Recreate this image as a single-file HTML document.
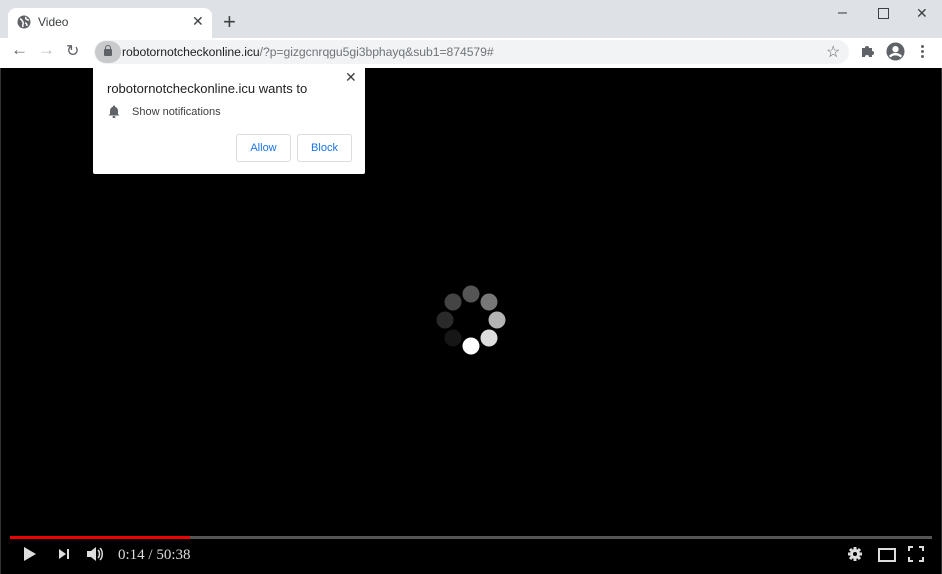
<!DOCTYPE html><html><head><style>
body{margin:0;width:942px;height:574px;overflow:hidden;background:#000;font-family:"Liberation Sans",Arial,sans-serif;position:relative}
.a{position:absolute}
</style></head><body>
<div class="a" style="left:0;top:0;width:942px;height:38px;background:#dee1e6"></div>
<div class="a" style="left:8px;top:8px;width:204px;height:32px;background:#fff;border-radius:8px 8px 0 0"></div>
<svg class="a" style="left:17px;top:15px" width="14" height="14" viewBox="0 0 14 14"><circle cx="7" cy="7" r="6.5" fill="#5f6368"/><path d="M3 4c2 0 2 2 3 3s-1 3 0 5M9 2c-1 2 1 3 3 3M8 8c1 0 2 1 2 3" stroke="#fff" stroke-width="1.5" fill="none"/></svg>
<div class="a" style="left:38px;top:15px;font-size:12px;color:#3c4043">Video</div>
<div class="a" style="left:192px;top:13px;font-size:14px;color:#3c4043">✕</div>
<div class="a" style="left:223px;top:9px;font-size:22px;color:#3c4043;font-weight:300">+</div>
<div class="a" style="left:838px;top:4px;font-size:16px;color:#3c4043">–</div>
<div class="a" style="left:878px;top:8px;width:9px;height:9px;border:1px solid #3c4043"></div>
<div class="a" style="left:916px;top:5px;font-size:14px;color:#3c4043">✕</div>
<div class="a" style="left:0;top:38px;width:942px;height:30px;background:#fff"></div>
<div class="a" style="left:11px;top:40px;font-size:17px;color:#5f6368">←</div>
<div class="a" style="left:38px;top:40px;font-size:17px;color:#bbb">→</div>
<div class="a" style="left:66px;top:41px;font-size:16px;color:#5f6368">↻</div>
<div class="a" style="left:94px;top:40px;width:755px;height:24px;background:#f1f3f4;border-radius:12px"></div>
<div class="a" style="left:95px;top:41px;width:26px;height:22px;background:#c8cacc;border-radius:11px"></div>
<div class="a" style="left:104px;top:49px;width:8px;height:7px;background:#5f6368;border-radius:1px"></div>
<div class="a" style="left:105px;top:45px;width:4px;height:5px;border:1px solid #5f6368;border-radius:3px 3px 0 0"></div>
<div class="a" style="left:122px;top:45px;font-size:12.2px;color:#202124;letter-spacing:-0.05px">robotornotcheckonline.icu<span style="color:#70757a">/?p=gizgcnrqgu5gi3bphayq&amp;sub1=874579#</span></div>
<div class="a" style="left:826px;top:42px;font-size:16px;color:#5f6368">☆</div>
<svg class="a" style="left:861px;top:44px" width="14" height="14" viewBox="0 0 14 14"><path d="M1 4h3a2 2 0 1 1 4 0h3v3a2 2 0 1 1 0 4v2H8a2 2 0 1 0-4 0H1z" fill="#5f6368"/></svg>
<svg class="a" style="left:886px;top:42px" width="19" height="19" viewBox="0 0 20 20"><circle cx="10" cy="10" r="9.5" fill="#5f6368"/><circle cx="10" cy="7.5" r="3.3" fill="#fff"/><path d="M4 15.5c3-3.5 9-3.5 12 0" stroke="#fff" stroke-width="2.5" fill="none"/></svg>
<div class="a" style="left:921px;top:45px;width:3px;height:3px;background:#5f6368;border-radius:2px;box-shadow:0 5px #5f6368,0 10px #5f6368"></div>
<div class="a" style="left:0;top:68px;width:1px;height:506px;background:#333"></div>
<div class="a" style="left:941px;top:68px;width:1px;height:506px;background:#333"></div>
<div class="a" style="left:93px;top:67px;width:272px;height:107px;background:#fff;border-radius:0 0 2px 2px"></div>
<div class="a" style="left:345px;top:69px;font-size:14px;color:#3c4043">✕</div>
<div class="a" style="left:107px;top:81px;font-size:13px;color:#202124">robotornotcheckonline.icu wants to</div>
<svg class="a" style="left:108px;top:105px" width="12" height="13" viewBox="0 0 12 13"><path d="M6 0.5a1 1 0 0 1 1 1.2C9 2.3 10 4 10 6v3l1.5 1.5h-11L2 9V6c0-2 1-3.7 3-4.3A1 1 0 0 1 6 0.5z" fill="#5f6368"/><rect x="4.5" y="11" width="3" height="2" rx="1" fill="#5f6368"/></svg>
<div class="a" style="left:132px;top:106px;font-size:11px;color:#3c4043">Show notifications</div>
<div class="a" style="left:236px;top:134px;width:53px;height:26px;border:1px solid #dadce0;border-radius:3px;color:#1a73e8;font-size:11px;line-height:26px;text-align:center">Allow</div>
<div class="a" style="left:297px;top:134px;width:53px;height:26px;border:1px solid #dadce0;border-radius:3px;color:#1a73e8;font-size:11px;line-height:26px;text-align:center">Block</div>
<svg class="a" style="left:430px;top:280px" width="80" height="80">
<circle cx="41" cy="66" r="8.5" fill="#fff"/><circle cx="59" cy="58" r="8.5" fill="#ddd"/><circle cx="67" cy="40" r="8.5" fill="#b4b4b4"/><circle cx="59" cy="22" r="8.5" fill="#777"/><circle cx="41" cy="14" r="8.5" fill="#555"/><circle cx="23" cy="22" r="8.5" fill="#444"/><circle cx="15" cy="40" r="8.5" fill="#2a2a2a"/><circle cx="23" cy="58" r="8.5" fill="#161616"/></svg>
<div class="a" style="left:10px;top:536px;width:922px;height:3px;background:#555"></div>
<div class="a" style="left:10px;top:536px;width:180px;height:3px;background:#e00"></div>
<svg class="a" style="left:23px;top:546px" width="14" height="16"><path d="M1 1L13 8L1 15Z" fill="#ddd"/></svg>
<svg class="a" style="left:58px;top:548px" width="12" height="12"><path d="M1 1L8 6L1 11Z M9 1h2v10h-2z" fill="#ddd"/></svg>
<svg class="a" style="left:86px;top:546px" width="18" height="16"><path d="M1 5h4l5-4v14l-5-4H1z" fill="#ddd"/><path d="M12 4c2 2 2 6 0 8M14 2c3 3 3 9 0 12" stroke="#ddd" stroke-width="1.5" fill="none"/></svg>
<div class="a" style="left:118px;top:547px;font-family:'Liberation Serif',serif;font-size:15px;color:#ddd">0:14 / 50:38</div>
<svg class="a" style="left:847px;top:546px" width="16" height="16" viewBox="0 0 16 16"><circle cx="8" cy="8" r="5" fill="#ddd"/><g stroke="#ddd" stroke-width="3"><path d="M8 1v14M1 8h14M3 3l10 10M13 3L3 13"/></g><circle cx="8" cy="8" r="2" fill="#000"/></svg>
<div class="a" style="left:878px;top:548px;width:14px;height:10px;border:2px solid #ddd"></div>
<svg class="a" style="left:908px;top:546px" width="16" height="16"><path d="M1 5V1h4M11 1h4v4M15 11v4h-4M5 15H1v-4" stroke="#ddd" stroke-width="2" fill="none"/></svg>
</body></html>
